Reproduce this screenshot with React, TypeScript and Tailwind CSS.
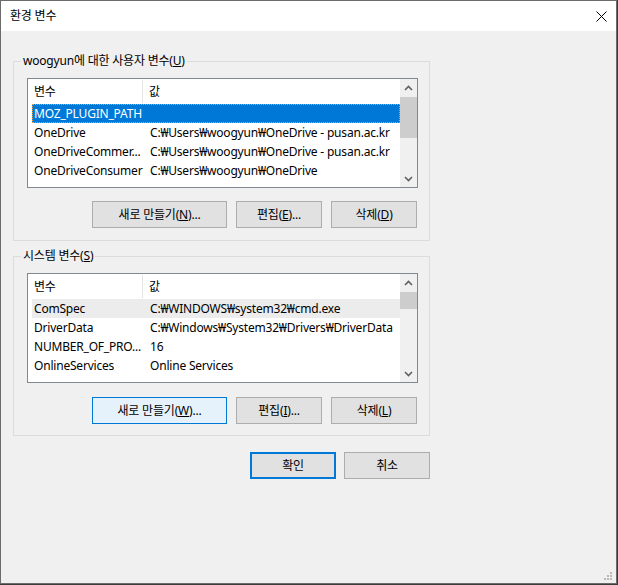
import React from 'react';

const FONT = { fontFamily: '"Noto Sans", "Noto Sans CJK KR", sans-serif', letterSpacing: '-0.2px' };

type Row = { name: string; value: string; state?: 'selected' | 'inactive' };

const userRows: Row[] = [
  { name: 'MOZ_PLUGIN_PATH', value: '', state: 'selected' },
  { name: 'OneDrive', value: 'C:₩Users₩woogyun₩OneDrive - pusan.ac.kr' },
  { name: 'OneDriveCommer...', value: 'C:₩Users₩woogyun₩OneDrive - pusan.ac.kr' },
  { name: 'OneDriveConsumer', value: 'C:₩Users₩woogyun₩OneDrive' },
];

const systemRows: Row[] = [
  { name: 'ComSpec', value: 'C:₩WINDOWS₩system32₩cmd.exe', state: 'inactive' },
  { name: 'DriverData', value: 'C:₩Windows₩System32₩Drivers₩DriverData' },
  { name: 'NUMBER_OF_PRO...', value: '16' },
  { name: 'OnlineServices', value: 'Online Services' },
];

const Chevron = ({ up }: { up?: boolean }) => (
  <svg width="9" height="6" viewBox="0 0 9 6">
    <path
      d={up ? 'M1 5 L4.5 1.5 L8 5' : 'M1 1 L4.5 4.5 L8 1'}
      fill="none"
      stroke="#606060"
      strokeWidth="1.6"
    />
  </svg>
);

const ScrollBar = ({ thumbTop, thumbHeight }: { thumbTop: number; thumbHeight: number }) => (
  <div className="w-[17px] h-full bg-[#f0f0f0] flex flex-col">
    <div className="h-[17px] flex items-center justify-center">
      <Chevron up />
    </div>
    <div className="flex-1 flex flex-col">
      <div style={{ height: thumbTop }} />
      <div className="bg-[#cdcdcd]" style={{ height: thumbHeight }} />
    </div>
    <div className="h-[17px] flex items-center justify-center">
      <Chevron />
    </div>
  </div>
);

const VarList = ({ rows, thumbTop, thumbHeight }: { rows: Row[]; thumbTop: number; thumbHeight: number }) => (
  <div className="w-[391px] h-[110px] border border-[#828790] bg-white flex overflow-hidden">
    <div className="flex-1 flex flex-col pl-[4px] overflow-hidden">
      <div className="h-[25px] flex text-[12px] text-black shrink-0">
        <div className="w-[111px] pl-[2px] flex items-center border-r border-[#e5e5e5] my-[1px]">변수</div>
        <div className="flex-1 pl-[6px] flex items-center">값</div>
      </div>
      {rows.map((r) => (
        <div
          key={r.name}
          className={
            'h-[19px] shrink-0 flex items-center text-[12px] whitespace-nowrap ' +
            (r.state === 'selected'
              ? 'bg-[#0078d7] text-white outline outline-1 outline-dotted outline-[#e9a040] -outline-offset-1'
              : r.state === 'inactive'
              ? 'bg-[#ececec] text-black'
              : 'text-black')
          }
        >
          <div className="w-[112px] pl-[2px] overflow-hidden">{r.name}</div>
          <div className="flex-1 pl-[6px] overflow-hidden">{r.value}</div>
        </div>
      ))}
    </div>
    <ScrollBar thumbTop={thumbTop} thumbHeight={thumbHeight} />
  </div>
);

const Btn = ({
  children,
  width,
  variant,
}: {
  children: React.ReactNode;
  width: string;
  variant?: 'hover' | 'default';
}) => (
  <div
    className={
      width +
      ' h-[27px] flex items-center justify-center text-[12px] text-black ' +
      (variant === 'hover'
        ? 'bg-[#e5f1fb] border border-[#0078d7]'
        : variant === 'default'
        ? 'bg-[#e1e1e1] border-2 border-[#0078d7]'
        : 'bg-[#e1e1e1] border border-[#adadad]')
    }
  >
    {children}
  </div>
);

const Group = ({ label, children }: { label: React.ReactNode; children: React.ReactNode }) => (
  <div className="relative w-[417px] h-[180px] border border-[#dcdcdc] pl-[13px] pt-[16px]">
    <div className="absolute left-[7px] top-[-9px] px-[2px] bg-[#f0f0f0] text-[12px] leading-[16px] text-black">
      {label}
    </div>
    {children}
  </div>
);

export default function App() {
  return (
    <div className="w-[618px] h-[585px] bg-[#3b3b3b]" style={FONT}>
      <div className="w-[617px] h-[584px] border border-[#6b6b6b] bg-[#f0f0f0] flex flex-col">
        {/* title bar */}
        <div className="h-[30px] bg-white flex items-center justify-between pl-[9px] pr-[9px] shrink-0">
          <span className="text-[12px] text-black">환경 변수</span>
          <svg width="11" height="11" viewBox="0 0 11 11">
            <path d="M0.5 0.5 L10.5 10.5 M10.5 0.5 L0.5 10.5" stroke="#000" strokeWidth="1" />
          </svg>
        </div>

        <div className="flex-1 flex flex-col pl-[12px] pt-[30px] relative">
          <Group
            label={
              <>
                woogyun에 대한 사용자 변수(<u>U</u>)
              </>
            }
          >
            <VarList rows={userRows} thumbTop={1} thumbHeight={41} />
            <div className="w-[390px] flex justify-end gap-[9px] mt-[13px]">
              <Btn width="w-[135px]">
                새로 만들기(<u>N</u>)...
              </Btn>
              <Btn width="w-[86px]">
                편집(<u>E</u>)...
              </Btn>
              <Btn width="w-[86px]">
                삭제(<u>D</u>)
              </Btn>
            </div>
          </Group>

          <div className="mt-[15px]">
            <Group
              label={
                <>
                  시스템 변수(<u>S</u>)
                </>
              }
            >
              <VarList rows={systemRows} thumbTop={1} thumbHeight={17} />
              <div className="w-[390px] flex justify-end gap-[9px] mt-[14px]">
                <Btn width="w-[135px]" variant="hover">
                  새로 만들기(<u>W</u>)...
                </Btn>
                <Btn width="w-[86px]">
                  편집(<u>I</u>)...
                </Btn>
                <Btn width="w-[86px]">
                  삭제(<u>L</u>)
                </Btn>
              </div>
            </Group>
          </div>

          <div className="w-[417px] flex justify-end gap-[8px] mt-[16px]">
            <Btn width="w-[86px]" variant="default">
              확인
            </Btn>
            <Btn width="w-[86px]">취소</Btn>
          </div>

          {/* resize grip */}
          <svg width="10" height="10" viewBox="0 0 10 10" className="absolute right-[2px] bottom-[1px]">
            <rect x="6" y="0" width="2" height="2" fill="#b8b8b8" />
            <rect x="3" y="3" width="2" height="2" fill="#b8b8b8" />
            <rect x="6" y="3" width="2" height="2" fill="#b8b8b8" />
            <rect x="0" y="6" width="2" height="2" fill="#b8b8b8" />
            <rect x="3" y="6" width="2" height="2" fill="#b8b8b8" />
            <rect x="6" y="6" width="2" height="2" fill="#b8b8b8" />
          </svg>
        </div>
      </div>
    </div>
  );
}
